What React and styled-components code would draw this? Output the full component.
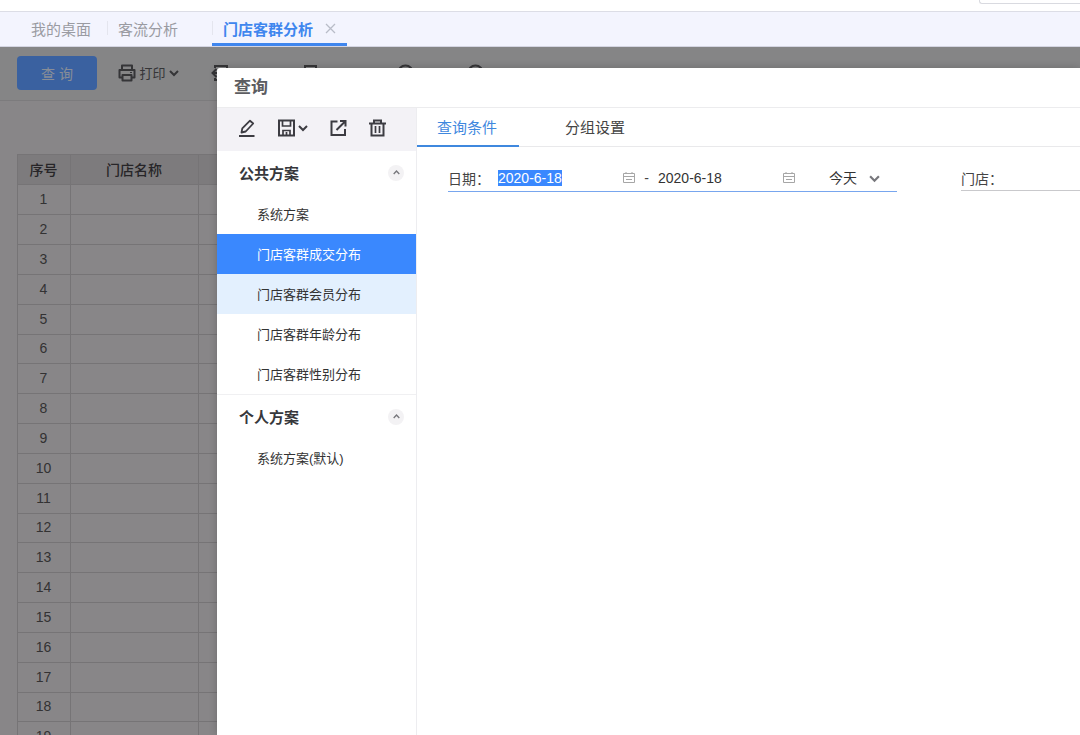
import React, { useEffect, useRef } from 'react';
import styled, { createGlobalStyle } from 'styled-components';

const publicPlans = [
  { name: '系统方案' },
  { name: '门店客群成交分布', state: 'active' },
  { name: '门店客群会员分布', state: 'hover' },
  { name: '门店客群年龄分布' },
  { name: '门店客群性别分布' },
];
const personalPlans = [{ name: '系统方案(默认)' }];
const rows = Array.from({ length: 19 }, (_, i) => i + 1);

const App = () => {
  return (
    <Page>
      <GlobalStyle />
      <TopStrip>
        <SearchBox type="text" aria-label="搜索" />
      </TopStrip>
      <TabBar>
        <PageTab href="#desktop">我的桌面</PageTab>
        <PageTab href="#flow" $divided $closable>客流分析</PageTab>
        <PageTab href="#group" $divided $active>
          门店客群分析
          <CloseIcon />
        </PageTab>
      </TabBar>
      <Workspace>
        <Toolbar />
        <StoreTable />
        <Mask />
        <QueryDialog />
      </Workspace>
    </Page>
  );
};

const Toolbar = () => (
  <ToolbarRow>
    <QueryButton>查 询</QueryButton>
    <ToolList>
      <ToolButton $span={61}>
        <PrintIcon />
        打印
        <ChevronIcon size={10} weight={2} />
      </ToolButton>
      <ToolButton $span={60} aria-label="退出"><ExitIcon /></ToolButton>
      <ToolButton $span={62} aria-label="收藏"><PageIcon /></ToolButton>
      <ToolButton $span={38} aria-label="刷新"><CircleIcon /></ToolButton>
      <ToolButton $span={38} aria-label="帮助"><CircleIcon /></ToolButton>
    </ToolList>
  </ToolbarRow>
);

const StoreTable = () => (
  <TableArea>
    <Table>
      <colgroup>
        <IndexCol />
        <NameCol />
        <col />
      </colgroup>
      <thead>
        <tr>
          <th>序号</th>
          <th>门店名称</th>
          <th />
        </tr>
      </thead>
      <tbody>
        {rows.map((n) => (
          <tr key={n}>
            <td>{n}</td>
            <td />
            <td />
          </tr>
        ))}
      </tbody>
    </Table>
  </TableArea>
);

const QueryDialog = () => (
  <Dialog role="dialog" aria-labelledby="dialog-title">
    <DialogTitle id="dialog-title">查询</DialogTitle>
    <DialogBody>
      <Sidebar>
        <PlanTools>
          <IconButton aria-label="编辑"><EditIcon /></IconButton>
          <IconButton aria-label="保存">
            <SaveIcon />
            <ChevronIcon size={10} weight={2} />
          </IconButton>
          <IconButton aria-label="导出"><ExportIcon /></IconButton>
          <IconButton aria-label="删除"><TrashIcon /></IconButton>
        </PlanTools>
        <PlanGroup title="公共方案" plans={publicPlans} />
        <PlanGroup title="个人方案" plans={personalPlans} />
      </Sidebar>
      <Main>
        <TabList role="tablist">
          <FormTab role="tab" aria-selected="true" $active>查询条件</FormTab>
          <FormTab role="tab" aria-selected="false">分组设置</FormTab>
        </TabList>
        <QueryForm />
      </Main>
    </DialogBody>
  </Dialog>
);

const PlanGroup = ({ title, plans }) => (
  <Group>
    <GroupHead>
      {title}
      <Collapse aria-label="收起">
        <ChevronIcon size={7} weight={2} up />
      </Collapse>
    </GroupHead>
    <PlanList>
      {plans.map((plan) => (
        <li key={plan.name}>
          <PlanButton $state={plan.state}>{plan.name}</PlanButton>
        </li>
      ))}
    </PlanList>
  </Group>
);

const QueryForm = () => {
  const start = useRef(null);

  useEffect(() => {
    start.current.focus();
    start.current.select();
  }, []);

  return (
    <Form>
      <DateField>
        <FieldLabel htmlFor="start">日期：</FieldLabel>
        <DateInput id="start" ref={start} defaultValue="2020-6-18" />
        <CalendarIcon />
        <Dash>-</Dash>
        <DateInput aria-label="结束日期" defaultValue="2020-6-18" />
        <CalendarIcon />
        <RangePicker>
          <RangeSelect aria-label="日期范围" defaultValue="today">
            <option value="today">今天</option>
          </RangeSelect>
          <ChevronIcon size={11} weight={2} />
        </RangePicker>
      </DateField>
      <StoreField>
        <FieldLabel htmlFor="store">门店：</FieldLabel>
        <StoreInput id="store" />
      </StoreField>
    </Form>
  );
};

const CloseIcon = () => (
  <svg width="11" height="11" viewBox="0 0 11 11" fill="none" stroke="#b9bcc8" strokeWidth="1.3">
    <path d="M1 1l9 9M10 1l-9 9" />
  </svg>
);

const ChevronIcon = ({ size, weight, up }) => (
  <svg width={size} height={size} viewBox="0 0 10 10" fill="none" stroke="currentColor" strokeWidth={weight}>
    <path d={up ? 'M1 7l4-4 4 4' : 'M1 3l4 4 4-4'} />
  </svg>
);

const PrintIcon = () => (
  <svg width="18" height="18" viewBox="0 0 18 18" fill="none" stroke="currentColor" strokeWidth="2">
    <path d="M4 6V1.500h10V6" strokeLinejoin="round" />
    <path d="M4 13.500H1.500V6h15v7.500H14" strokeLinejoin="round" />
    <path d="M4.500 11h9v5.500h-9z" strokeLinejoin="round" />
    <path d="M12 8.500h2" strokeWidth="1" />
  </svg>
);

const ExitIcon = () => (
  <svg width="18" height="18" viewBox="0 0 18 18" fill="none" stroke="currentColor" strokeWidth="2">
    <path d="M4 4V2h12v14H4v-2M12 9H2M5.500 5L1.500 9l4 4" />
  </svg>
);

const PageIcon = () => (
  <svg width="15" height="18" viewBox="0 0 15 18" fill="none" stroke="currentColor" strokeWidth="2">
    <path d="M2 2h11v14H2z" />
  </svg>
);

const CircleIcon = () => (
  <svg width="17" height="18" viewBox="0 0 17 18" fill="none" stroke="currentColor" strokeWidth="2">
    <circle cx="8.500" cy="9" r="7.500" />
  </svg>
);

const EditIcon = () => (
  <svg width="17" height="18" viewBox="0 0 17 18" fill="none" stroke="currentColor" strokeWidth="1.800">
    <path d="M0 17h15.500" strokeWidth="2" />
    <path d="M2.500 13.500l.8-4.200L11 1.700l3.200 2.800-7.500 8z" strokeLinejoin="round" />
  </svg>
);

const SaveIcon = () => (
  <svg width="18" height="18" viewBox="0 0 18 18" fill="none" stroke="currentColor" strokeWidth="2">
    <path d="M1 1.500h15v15H1z" />
    <path d="M4.500 2v5h8V2" strokeWidth="1.700" />
    <path d="M5 16v-4.500h7V16M8.500 13v3" strokeWidth="1.700" />
  </svg>
);

const ExportIcon = () => (
  <svg width="17" height="18" viewBox="0 0 17 18" fill="none" stroke="currentColor" strokeWidth="2">
    <path d="M7.500 2.500H1.500v13.500h13.500V10" />
    <path d="M10 2h5.500v5.500M15.300 2.200L6.500 11" />
  </svg>
);

const TrashIcon = () => (
  <svg width="17" height="18" viewBox="0 0 17 18" fill="none" stroke="currentColor" strokeWidth="2">
    <path d="M0 4.500h17M5 4V1.500h7V4M2.500 5v11.500h12V5" />
    <path d="M6.500 7v7M10.500 7v7" strokeWidth="1.700" />
  </svg>
);

const CalendarIcon = () => (
  <svg width="12" height="12" viewBox="0 0 12 12" fill="none" stroke="#a6a6a6">
    <path d="M.5 1.500h11v9H.5zM.5 4.500h11M3 0v2M9 0v2M3 7.500h6" />
  </svg>
);

const GlobalStyle = createGlobalStyle`
  * {
    box-sizing: border-box;
  }
  body {
    margin: 0;
  }
  body, button, input, select {
    font-family: "Liberation Sans", "Noto Sans CJK SC", sans-serif;
  }
  button {
    padding: 0;
    border: none;
    background: none;
    color: inherit;
  }
  svg {
    display: block;
    flex-shrink: 0;
  }
`;

const Page = styled.div`
  display: flex;
  flex-direction: column;
  height: 100vh;
  overflow: hidden;
  background: #ffffff;
`;

const TopStrip = styled.header`
  display: flex;
  justify-content: flex-end;
  align-items: flex-start;
  height: 11px;
`;

const SearchBox = styled.input`
  width: 101px;
  height: 4px;
  padding: 0;
  border: 1px solid #d9dae0;
  border-width: 0 0 1px 1px;
  border-radius: 0 0 0 3px;
  outline: none;
`;

const TabBar = styled.nav`
  display: flex;
  flex-shrink: 0;
  height: 36px;
  padding-left: 20px;
  border-top: 1px solid #dcdde6;
  border-bottom: 1px solid #d4d5e2;
  background: #f3f4fe;
`;

const PageTab = styled.a`
  display: flex;
  align-items: center;
  gap: 12px;
  padding: 0 ${(p) => (p.$closable ? 34 : p.$active ? 11 : 16)}px 0 11px;
  border-bottom: 3px solid ${(p) => (p.$active ? '#3f86ee' : 'transparent')};
  border-top: 1px solid transparent;
  background: ${(p) => (p.$divided ? 'linear-gradient(#e4e5ee, #e4e5ee) left center / 1px 14px no-repeat' : 'none')};
  color: ${(p) => (p.$active ? '#3f86ee' : '#9a9ba2')};
  font-size: 15px;
  font-weight: ${(p) => (p.$active ? 700 : 400)};
  text-decoration: none;
  white-space: nowrap;
`;

const Workspace = styled.div`
  position: relative;
  flex: 1;
  min-height: 0;
  overflow: hidden;
  background: #c3c1c3;
`;

const ToolbarRow = styled.div`
  display: flex;
  align-items: center;
  gap: 21px;
  height: 54px;
  padding: 0 17px 2px;
  border-bottom: 1px solid #b2b1b3;
  background: #bfbfc1;
`;

const QueryButton = styled.button`
  width: 80px;
  height: 34px;
  border-radius: 4px;
  background: #538ce6;
  color: #c3cbd8;
  font-size: 14px;
`;

const ToolList = styled.div`
  display: flex;
  gap: 32px;
`;

const ToolButton = styled.button`
  display: flex;
  align-items: center;
  justify-content: space-between;
  width: ${(p) => p.$span}px;
  color: #4c4c50;
  font-size: 13px;
`;

const TableArea = styled.div`
  padding: 53px 0 0 17px;
`;

const Table = styled.table`
  width: 100%;
  table-layout: fixed;
  border-collapse: collapse;
  color: #4a484a;
  font-size: 14px;
  text-align: center;

  th, td {
    height: 30px;
    padding: 0 1px 2px 0;
    border: 1px solid #a9a7a9;
  }
  th {
    background: #b3b1b3;
    color: #38363a;
    font-weight: 500;
  }
  tr:nth-child(6n) td {
    height: 29px;
  }
`;

const IndexCol = styled.col`
  width: 53px;
`;

const NameCol = styled.col`
  width: 128px;
`;

const Mask = styled.div`
  position: absolute;
  inset: 0;
  background: rgba(0, 0, 0, 0.3);
`;

const Dialog = styled.section`
  position: absolute;
  top: 21px;
  right: 0;
  bottom: 0;
  left: 217px;
  display: flex;
  flex-direction: column;
  border-radius: 3px 0 0 0;
  background: #ffffff;
  box-shadow: 0 0 8px rgba(0, 0, 0, 0.2);
`;

const DialogTitle = styled.h1`
  height: 40px;
  margin: 0;
  padding-left: 17px;
  border-bottom: 1px solid #ececee;
  color: #5c5d61;
  font-size: 17px;
  font-weight: 700;
  line-height: 39px;
`;

const DialogBody = styled.div`
  display: flex;
  flex: 1;
  min-height: 0;
`;

const Sidebar = styled.aside`
  width: 200px;
  flex-shrink: 0;
  border-right: 1px solid #ededf0;
`;

const PlanTools = styled.div`
  display: flex;
  align-items: center;
  gap: 22px;
  height: 43px;
  padding: 0 0 4px 22px;
  background: #f3f2f6;
`;

const IconButton = styled.button`
  display: flex;
  align-items: center;
  gap: 2px;
  color: #3c3c42;
`;

const Group = styled.section`
  & + & {
    border-top: 1px solid #f0f0f2;
  }
`;

const GroupHead = styled.h2`
  display: flex;
  align-items: center;
  justify-content: space-between;
  height: 43px;
  margin: 0;
  padding: 0 12px 0 22px;
  color: #37383c;
  font-size: 15px;
  font-weight: 700;
`;

const Collapse = styled.button`
  display: flex;
  align-items: center;
  justify-content: center;
  width: 16px;
  height: 16px;
  border-radius: 50%;
  background: #f3f2f4;
  color: #77777c;
`;

const PlanList = styled.ul`
  margin: 0;
  padding: 0;
  list-style: none;
`;

const stateColors = {
  active: { back: '#3a88fe', text: '#ffffff' },
  hover: { back: '#e3f0fe', text: '#333333' },
};

const PlanButton = styled.button`
  display: block;
  width: 100%;
  height: 40px;
  padding: 0 0 2px 40px;
  background: ${(p) => (p.$state ? stateColors[p.$state].back : 'transparent')};
  color: ${(p) => (p.$state ? stateColors[p.$state].text : '#333333')};
  font-size: 13px;
  text-align: left;
`;

const Main = styled.div`
  flex: 1;
  min-width: 0;
`;

const TabList = styled.div`
  display: flex;
  gap: 26px;
  height: 39px;
  box-shadow: inset 0 -1px 0 #e9e9eb;
`;

const FormTab = styled.button`
  padding: 0 22px 0 20px;
  border-bottom: 2px solid ${(p) => (p.$active ? '#3f88de' : 'transparent')};
  color: ${(p) => (p.$active ? '#3f88de' : '#444444')};
  font-size: 15px;
`;

const Form = styled.form`
  display: flex;
  gap: 64px;
  padding: 20px 0 0 31px;
  color: #444444;
  font-size: 14px;
`;

const DateField = styled.div`
  display: flex;
  align-items: center;
  width: 449px;
  height: 25px;
  padding-bottom: 2px;
  border-bottom: 1px solid #78a6ee;
`;

const FieldLabel = styled.label`
  width: 50px;
  flex-shrink: 0;
  white-space: nowrap;
`;

const DateInput = styled.input`
  width: 125px;
  height: 16px;
  padding: 0;
  border: none;
  outline: none;
  color: #333333;
  font-size: 14px;
  line-height: 16px;

  &::selection {
    background: #3a88fe;
    color: #ffffff;
  }
`;

const Dash = styled.span`
  width: 23px;
  text-align: center;
`;

const RangePicker = styled.div`
  display: flex;
  align-items: center;
  gap: 8px;
  padding-left: 34px;
  color: #77777c;
`;

const RangeSelect = styled.select`
  width: 32px;
  padding: 0;
  border: none;
  outline: none;
  appearance: none;
  background: transparent;
  color: #333333;
  font-size: 14px;
`;

const StoreField = styled.div`
  display: flex;
  align-items: center;
  flex: 1;
  min-width: 0;
  height: 24px;
  padding-bottom: 2px;
  border-bottom: 1px solid #c9c9cc;
`;

const StoreInput = styled.input`
  flex: 1;
  min-width: 0;
  border: none;
  outline: none;
`;

export default App;
